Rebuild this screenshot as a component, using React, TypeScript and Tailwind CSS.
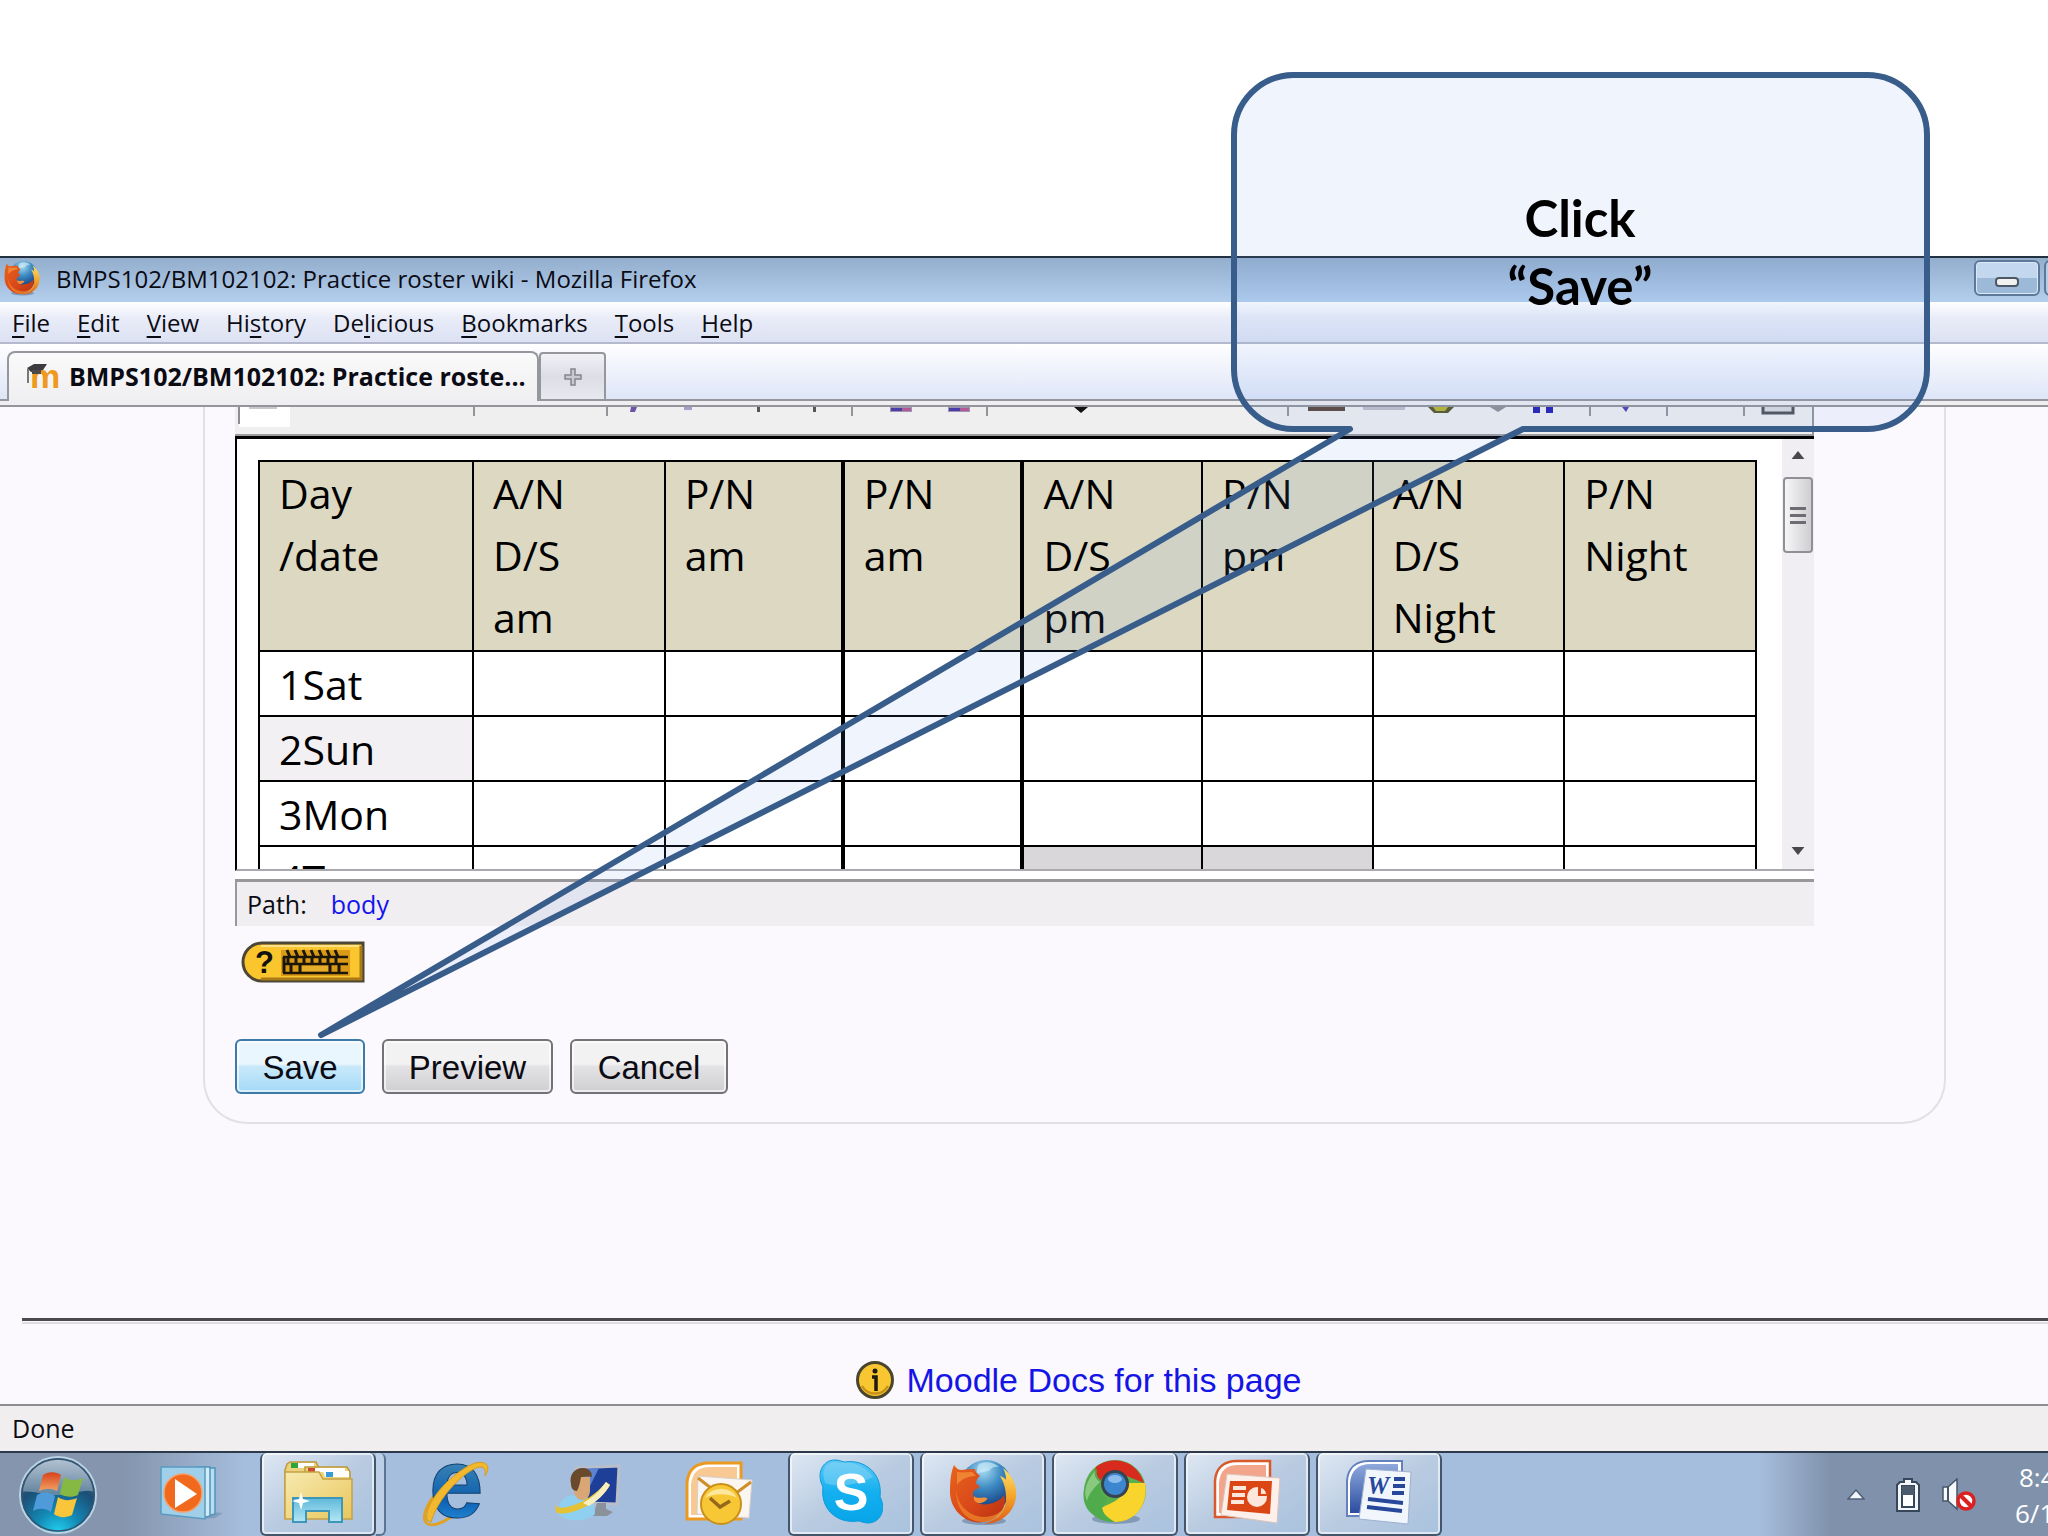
import React from "react";

type Column = { lines: string[]; width: string; thick?: boolean };

const columns: Column[] = [
  { lines: ["Day", "/date"], width: "w-[14.3%]" },
  { lines: ["A/N", "D/S", "am"], width: "w-[12.8%]" },
  { lines: ["P/N", "am"], width: "w-[11.9%]" },
  { lines: ["P/N", "am"], width: "w-[12%]", thick: true },
  { lines: ["A/N", "D/S", "pm"], width: "w-[12%]", thick: true },
  { lines: ["P/N", "pm"], width: "w-[11.4%]" },
  { lines: ["A/N", "D/S", "Night"], width: "w-[12.8%]" },
  { lines: ["P/N", "Night"], width: "w-[12.8%]" },
];

const rows = [
  { day: "1Sat", head: "bg-white", closed: [] as number[] },
  { day: "2Sun", head: "bg-[#f2f0f2]", closed: [] as number[] },
  { day: "3Mon", head: "bg-white", closed: [] as number[] },
  { day: "4Tue", head: "bg-white", closed: [4, 5] },
];

// label split around its access key
const menus = [
  ["", "F", "ile"],
  ["", "E", "dit"],
  ["", "V", "iew"],
  ["Hi", "s", "tory"],
  ["De", "l", "icious"],
  ["", "B", "ookmarks"],
  ["", "T", "ools"],
  ["", "H", "elp"],
];

const FirefoxIcon = ({ id, className }: { id: string; className: string }) => (
  <svg viewBox="0 0 68 68" className={className} aria-hidden="true">
    <defs>
      <radialGradient id={`${id}-globe`} cx="45%" cy="20%" r="75%">
        <stop offset="0" stopColor="#a9dcf2" />
        <stop offset="0.45" stopColor="#3f8cc4" />
        <stop offset="1" stopColor="#123a7c" />
      </radialGradient>
      <linearGradient id={`${id}-fox`} x1="0" y1="0" x2="1" y2="1">
        <stop offset="0" stopColor="#e8641c" />
        <stop offset="0.55" stopColor="#d9481a" />
        <stop offset="1" stopColor="#b5300f" />
      </linearGradient>
      <linearGradient id={`${id}-tail`} x1="0" y1="0" x2="0" y2="1">
        <stop offset="0" stopColor="#fbe06a" />
        <stop offset="0.5" stopColor="#f4a62a" />
        <stop offset="1" stopColor="#dd5a17" />
      </linearGradient>
    </defs>
    <ellipse cx="35" cy="63" rx="22" ry="4" fill="#27436b" opacity="0.35" />
    <circle cx="37" cy="28" r="26" fill={`url(#${id}-globe)`} />
    <path d="M30 6c6-3 15-2 20 3-5-1-8 1-10 4-5 0-8 3-12 2 0-4 0-6 2-9z" fill="#d6f0fa" opacity="0.6" />
    <path d="M54 10c9 7 14 17 13 28-1 16-15 28-32 28 16-5 22-14 22-26 0-11-3-17-6-22 3 1 5 2 6 4 0-5-1-8-3-12z" fill={`url(#${id}-tail)`} />
    <path d="M5 7c2 3 4 5 8 5 4-1 9-1 13-1 0 3 3 5 5 7-3 2-4 5-4 8 3 1 4 2 3 4-3 1-6 2-6 6 0 8 8 12 15 10 7-1 13-4 16-9 4 10-4 24-20 27C17 67 1 52 1 34 1 22 2 14 5 7z" fill={`url(#${id}-fox)`} />
    <path d="M25 38c4 4 9 0 13 2 1 2-5 6-9 5-3-1-5-4-4-7z" fill="#f4903a" />
    <path d="M7 30c0 14 10 28 28 29 10 0 18-5 22-12-1 9-10 17-23 17C17 64 6 50 7 30z" fill="#f08a2b" opacity="0.7" />
    <path d="M8 14c6 1 10 0 15 0l4 4c-7 0-14 2-19 9z" fill="#f08435" />
  </svg>
);

const MoodleIcon = () => (
  <svg viewBox="0 0 34 28" className="h-7 w-[34px] shrink-0 overflow-visible" aria-hidden="true">
    <text x="3" y="25" fontSize="34" fontWeight="bold" fontFamily="Liberation Sans, sans-serif" fill="#ef9a1c">
      m
    </text>
    <path d="M0 5l7-4h13l-4 6-12 2z" fill="#3c3c40" />
    <path d="M5 7h9v4H5z" fill="#4a4a4f" />
    <path d="M1 6v14" stroke="#77777c" strokeWidth="2" />
  </svg>
);

const KeyboardIcon = () => (
  <svg viewBox="0 0 124 42" className="h-[42px] w-[124px] overflow-visible" aria-hidden="true">
    <path d="M21 2h101v38H21C10 40 2 31 2 21S10 2 21 2z" fill="#fbc62d" stroke="#4c4636" strokeWidth="3" />
    <path d="M120 5v33H20" fill="none" stroke="#a97a16" strokeWidth="3" />
    <path d="M20 5h98" stroke="#fde08a" strokeWidth="2" />
    <text x="14" y="32" fontSize="31" fontWeight="bold" fontFamily="Liberation Sans, sans-serif" fill="#111">
      ?
    </text>
    <path d="M40 9h69v26H40z" fill="#d99a18" />
    <path d="M42 16h65M42 23h65M42 32h65" stroke="#1c1608" strokeWidth="2.5" />
    <path d="M46 9l3 7M54 9l3 7M62 9l3 7M70 9l3 7M78 9l3 7M86 9l3 7M94 9l3 7M47 16v7M55 16v7M63 16v7M71 16v7M79 16v7M87 16v7M95 16v7M50 24v8M59 24v8M89 24v8M98 24v8M43 16v16" stroke="#1c1608" strokeWidth="3" />
    <path d="M61 25h26v5H61z" fill="#e6ad2c" />
  </svg>
);

const StartIcon = () => (
  <svg viewBox="0 0 80 78" className="h-[78px] w-20" aria-hidden="true">
    <defs>
      <radialGradient id="orb" cx="50%" cy="100%" r="85%">
        <stop offset="0" stopColor="#22d3f2" />
        <stop offset="0.35" stopColor="#1389b5" />
        <stop offset="0.75" stopColor="#1b4f77" />
        <stop offset="1" stopColor="#3f5f7b" />
      </radialGradient>
      <linearGradient id="orb-gloss" x1="0" y1="0" x2="0" y2="1">
        <stop offset="0" stopColor="#d7e3ee" />
        <stop offset="1" stopColor="#7892aa" />
      </linearGradient>
      <linearGradient id="flag-red" x1="0" y1="0" x2="0" y2="1">
        <stop offset="0" stopColor="#d8431b" />
        <stop offset="1" stopColor="#f3a163" />
      </linearGradient>
    </defs>
    <circle cx="40" cy="39" r="38" fill="url(#orb)" stroke="#b9d3e5" strokeWidth="2" />
    <path d="M4 36C5 17 20 3 40 3s35 14 36 33c-10-4-22 4-36 3-14 1-26-5-36-3z" fill="url(#orb-gloss)" opacity="0.75" />
    <circle cx="40" cy="39" r="36" fill="none" stroke="#33536e" strokeWidth="1.5" />
    <path d="M25 19c7-4 13-3 18 0l-4 16c-6-3-11-3-18 0z" fill="url(#flag-red)" />
    <path d="M46 21c5 4 12 4 19 1l-5 17c-6 3-13 2-18-1z" fill="#86b944" />
    <path d="M19 39c7-4 13-3 18 1l-4 16c-6-4-12-4-18-1z" fill="#4f9ad9" />
    <path d="M40 41c5 4 12 4 19 1l-5 17c-6 3-13 3-18-1z" fill="#f9c53b" />
  </svg>
);

const MediaIcon = () => (
  <svg viewBox="0 0 64 56" className="h-14 w-16" aria-hidden="true">
    <path d="M46 46l18 2-8 5-14 1z" fill="#6c88a8" opacity="0.5" />
    <path d="M40 3h16v46l-12 3z" fill="#b9dcf0" stroke="#4f94bb" strokeWidth="1.5" />
    <path d="M38 2h13v49l-8 2z" fill="#d1ebf7" stroke="#4f94bb" strokeWidth="1.5" />
    <path d="M2 2h44v52L2 49z" fill="#9fcfe9" stroke="#5a9bc0" strokeWidth="1.5" />
    <circle cx="24" cy="28" r="19" fill="#f1691c" stroke="#f7a06a" strokeWidth="1.5" />
    <path d="M16 14v29l22-14z" fill="#fff" />
  </svg>
);

const FolderIcon = () => (
  <svg viewBox="0 0 70 64" className="h-16 w-[70px]" aria-hidden="true">
    <defs>
      <linearGradient id="folder" x1="0" y1="0" x2="1" y2="1">
        <stop offset="0" stopColor="#f7eab0" />
        <stop offset="1" stopColor="#e9c65c" />
      </linearGradient>
      <linearGradient id="rack" x1="0" y1="0" x2="0" y2="1">
        <stop offset="0" stopColor="#5fb9da" />
        <stop offset="1" stopColor="#b5e6f5" />
      </linearGradient>
    </defs>
    <path d="M4 4l3-2h26l3 6v50H2V10z" fill="#ecd27a" stroke="#bd993c" strokeWidth="1.5" />
    <path d="M14 3h17v5H14z" fill="#fff" />
    <path d="M8 3h7v5H8z" fill="#2aa63a" />
    <path d="M22 7h42l3 5v46H22z" fill="#efd57b" stroke="#bd993c" strokeWidth="1.5" />
    <path d="M30 8h32v4H30z" fill="#fff" />
    <path d="M25 8h7v5h-7z" fill="#cc4b2d" />
    <path d="M2 12h34l4 7h29v40H2z" fill="url(#folder)" stroke="#c5a146" strokeWidth="1.5" />
    <path d="M40 11h26v6H42z" fill="#fff" />
    <path d="M43 12h7v5h-7z" fill="#3a9bdc" />
    <path d="M10 38h49v24H46V51H23v11H10z" fill="url(#rack)" stroke="#3f97b8" strokeWidth="2" />
    <path d="M18 32l2 7 7 2-7 2-2 7-2-7-7-2 7-2z" fill="#fff" />
  </svg>
);

const ExplorerIcon = () => (
  <svg viewBox="0 0 70 66" className="h-[66px] w-[70px] overflow-visible" aria-hidden="true">
    <defs>
      <linearGradient id="ie" x1="0" y1="0" x2="0" y2="1">
        <stop offset="0.3" stopColor="#3c84b3" />
        <stop offset="0.65" stopColor="#0d5fb0" />
        <stop offset="1" stopColor="#30a5f0" />
      </linearGradient>
    </defs>
    <path d="M14 36c-9 12-13 24-6 28 6 3 16-2 26-9" fill="none" stroke="#e0a125" strokeWidth="3" />
    <text x="9" y="57" fontSize="98" fontWeight="bold" fontFamily="Liberation Sans, sans-serif" fill="url(#ie)" stroke="#13406f" strokeWidth="1">
      e
    </text>
    <path d="M7 60C4 47 22 22 45 8 54 2 62 1 66 4c3 3 2 7-1 12 1-5 0-8-3-9C52 5 20 32 11 62z" fill="#f3b92e" stroke="#d79a1e" strokeWidth="1" />
  </svg>
);

const MessengerIcon = () => (
  <svg viewBox="0 0 68 58" className="h-[58px] w-[68px]" aria-hidden="true">
    <path d="M23 4l43-2-2 38-32-1z" fill="#1e3f98" stroke="#b9bfca" strokeWidth="3" />
    <path d="M24 5l22-1-12 24-8 1z" fill="#5a83d2" />
    <path d="M44 39h9v6l7 3-6 4H40z" fill="#8b9199" />
    <path d="M5 50c0-14 8-19 19-19s18 6 18 19c-8 8-29 9-37 0z" fill="#8fd0f0" />
    <path d="M22 13h15v13c0 7-4 10-8 10s-8-4-8-10z" fill="#d8a775" />
    <path d="M18 20c-2-9 3-16 12-16 6 0 9 4 9 9-4-1-8 0-11 0-1 6-2 10-4 14-4 0-6-3-6-7z" fill="#6a4a2b" />
    <path d="M2 41c5 8 36-3 51-23l4 3C46 42 10 54 3 48z" fill="#e5c135" />
    <path d="M30 39c9-5 16-11 23-21l4 3c-6 10-13 16-21 21z" fill="#f8efc0" />
  </svg>
);

const OutlookIcon = () => (
  <svg viewBox="0 0 68 64" className="h-16 w-[68px]" aria-hidden="true">
    <path d="M2 58V22C3 8 12 2 24 2h32v56z" fill="#fff" stroke="#eb9a1f" strokeWidth="3" />
    <path d="M6 54V24C7 11 14 6 25 6h27v48z" fill="#f8c993" />
    <path d="M13 15l54 4-3 38-52-4z" fill="#fbf6f1" stroke="#d6cfc9" strokeWidth="1" />
    <path d="M13 17l22 17M66 21L43 38" stroke="#cf8e29" strokeWidth="3" />
    <circle cx="36" cy="43" r="20" fill="#f8c736" stroke="#c98f1b" strokeWidth="2" />
    <path d="M20 37a17 14 0 0 1 32 0c-8-5-24-5-32 0z" fill="#fde79c" />
    <path d="M25 37l10 9 10-6" fill="none" stroke="#95691a" strokeWidth="3.5" />
  </svg>
);

const SkypeIcon = () => (
  <svg viewBox="0 0 64 66" className="h-[66px] w-16" aria-hidden="true">
    <defs>
      <linearGradient id="skype" x1="0" y1="0" x2="0" y2="1">
        <stop offset="0" stopColor="#5fc8f5" />
        <stop offset="0.5" stopColor="#14b0f0" />
        <stop offset="1" stopColor="#07a4e8" />
      </linearGradient>
    </defs>
    <path d="M16 1c5 0 7 2 10 2C45 0 64 14 61 38c6 10 2 26-12 26-5 0-7-2-10-2C18 65 1 50 4 28-3 15 3 1 16 1z" fill="url(#skype)" stroke="#0b9bdb" strokeWidth="1" />
    <path d="M5 19C2 8 11 1 20 4c14-2 27 4 34 14-12 6-32 12-48 6z" fill="#9bdcf8" opacity="0.4" />
    <text x="32" y="51" textAnchor="middle" fontSize="52" fontWeight="bold" fontFamily="Liberation Sans, sans-serif" fill="#fff">
      S
    </text>
  </svg>
);

const ChromeIcon = () => (
  <svg viewBox="0 0 66 66" className="h-[66px] w-[66px]" aria-hidden="true">
    <ellipse cx="34" cy="60" rx="24" ry="5" fill="#3d5878" opacity="0.4" />
    <circle cx="33" cy="32" r="31" fill="#58b04c" />
    <path d="M14 8C26-2 53-3 62 24l-25-10c-10-2-17 4-19 8-4-4-6-8-4-14z" fill="#d92a1e" />
    <path d="M63 24C67 44 54 63 33 63c-6-1-10-4-13-14 4-4 22-6 25-25z" fill="#f8d42c" />
    <path d="M15 10C1 20-4 42 9 54c6 6 13 9 24 9-8-5-13-9-13-14 2-3 4-6 5-9-8-6-8-12-6-18-4-4-5-7-4-12z" fill="#4fab4c" />
    <path d="M13 12C4 22 1 33 5 42c2-8 8-14 13-19-4-3-6-6-5-11z" fill="#a2d597" opacity="0.7" />
    <circle cx="33" cy="25" r="14" fill="#37434f" />
    <circle cx="33" cy="25" r="11" fill="#3c86d0" />
    <ellipse cx="33" cy="20" rx="7" ry="4" fill="#8abcec" />
  </svg>
);

const PowerPointIcon = () => (
  <svg viewBox="0 0 68 66" className="h-[66px] w-[68px]" aria-hidden="true">
    <path d="M2 58V22C3 8 12 2 24 2h33v56z" fill="#fff" stroke="#d9592a" strokeWidth="2.5" />
    <path d="M6 54V24C7 11 14 6 25 6h28v48z" fill="#f2a58a" />
    <path d="M14 15l53 4-3 45-56-8z" fill="#fdf0ea" stroke="#dcc3ba" strokeWidth="1" />
    <path d="M17 22h42l-2 33-43-4z" fill="#dc4514" />
    <path d="M20 29h13M19 36h13M18 43h13" stroke="#fde7dd" strokeWidth="4" />
    <circle cx="44" cy="38" r="10" fill="#fde7dd" />
    <path d="M45 37V27a10 10 0 0 1 9 10z" fill="#dc4514" />
    <path d="M48 35v-6a7 7 0 0 1 5 6z" fill="#fde7dd" />
  </svg>
);

const WordIcon = () => (
  <svg viewBox="0 0 68 66" className="h-[66px] w-[68px]" aria-hidden="true">
    <defs>
      <linearGradient id="word" x1="0" y1="0" x2="0" y2="1">
        <stop offset="0" stopColor="#8fa9dc" />
        <stop offset="1" stopColor="#2c4da0" />
      </linearGradient>
    </defs>
    <path d="M2 57V22C3 8 12 2 24 2h33v55z" fill="#fff" stroke="#6480bd" strokeWidth="2" />
    <path d="M5 54V24C6 11 14 5 25 5h28v49z" fill="url(#word)" />
    <path d="M21 10l45 3-3 52-49-5z" fill="#f1f6fd" stroke="#9fb1cf" strokeWidth="1" />
    <text x="22" y="35" fontSize="25" fontWeight="bold" fontStyle="italic" fontFamily="Liberation Serif, serif" fill="#27479b">
      W
    </text>
    <path d="M49 20h11M48 27h12M47 34h12M23 40l35 4M22 48l35 4" stroke="#27479b" strokeWidth="4" />
  </svg>
);

const BatteryIcon = () => (
  <svg viewBox="0 0 26 36" className="h-9 w-[26px]" aria-hidden="true">
    <path d="M9 5V2h8v3h4l3 3v26H2V8l3-3z" fill="#f4f6f9" stroke="#36475b" strokeWidth="2" />
    <path d="M7 9h12v21H7z" fill="#fff" stroke="#36475b" strokeWidth="2" />
    <path d="M7 9h12v9H7z" fill="#4b5a6c" />
  </svg>
);

const SpeakerIcon = () => (
  <svg viewBox="0 0 36 34" className="h-[34px] w-9" aria-hidden="true">
    <path d="M2 9h5l9-8v30l-9-8H2z" fill="#f7f9fb" stroke="#46566a" strokeWidth="1.5" />
    <path d="M7 9v14" stroke="#46566a" strokeWidth="2" />
    <circle cx="25" cy="23" r="8" fill="#fff" stroke="#dc1f1f" strokeWidth="3.5" />
    <path d="M19 17l12 12" stroke="#dc1f1f" strokeWidth="4" />
  </svg>
);

const InfoIcon = () => (
  <svg viewBox="0 0 40 40" className="h-10 w-10" aria-hidden="true">
    <circle cx="20" cy="20" r="17.5" fill="#f8c630" stroke="#4a452f" strokeWidth="3" />
    <path d="M7 26a15 15 0 0 0 26 0" fill="none" stroke="#c79118" strokeWidth="2.5" />
    <circle cx="20" cy="11" r="2.5" fill="#1d1a10" />
    <path d="M17 17h4v14" fill="none" stroke="#1d1a10" strokeWidth="3.5" />
  </svg>
);

// only the lower edge of the editor's button row shows under the tab bar
const ToolbarEdge = () => (
  <svg viewBox="0 0 1576 27" className="block h-[27px] w-[1576px] shrink-0" aria-hidden="true">
    <path d="M4 0h51v20H4z" fill="#fff" />
    <path d="M4 0v17" stroke="#8d8d92" strokeWidth="2" />
    <path d="M14 0h28v2H14z" fill="#c9c8cd" />
    <path d="M239 0v9M372 0v9M617 0v9M752 0v9M1053 0v9M1355 0v9M1432 0v9M1509 0v9" stroke="#94949a" strokeWidth="2" />
    <path d="M396 0h6l-2 5h-5z" fill="#6a55a8" />
    <path d="M449 0h8v3h-8z" fill="#a89cd0" />
    <path d="M522 0h3v5h-3zM578 0h3v5h-3z" fill="#55555a" />
    <path d="M655 0h22v5h-22zM713 0h22v5h-22z" fill="#9f93b4" />
    <path d="M656 1h11v3h-11zM714 1h11v3h-11z" fill="#4a3fa8" />
    <path d="M667 1h9v3h-9zM725 1h9v3h-9z" fill="#b25a98" />
    <path d="M839 0h14l-7 6z" fill="#111" />
    <path d="M1073 0h37v4h-37z" fill="#5b4638" />
    <path d="M1128 0h42v3h-42z" fill="#bfc0c8" />
    <path d="M1193 0h26l-6 6h-14z" fill="#55552a" />
    <path d="M1198 0h15l-3 4h-9z" fill="#b9b52c" />
    <path d="M1255 0h16l-8 5z" fill="#8e9096" />
    <path d="M1298 0h7v6h-7zM1311 0h7v6h-7z" fill="#2320b4" />
    <path d="M1387 0h7l-3 5z" fill="#4b3fb2" />
    <path d="M1528 0v6h30V0" fill="#d9dade" stroke="#4f5256" strokeWidth="3" />
  </svg>
);

const TitleBar = () => (
  <div className="flex h-[46px] items-center overflow-hidden border-t-2 border-[#23303f] bg-linear-to-b from-[#94aecd] to-[#b3cfed]">
    <FirefoxIcon id="title-fx" className="mb-1 ml-1 h-9 w-9 shrink-0" />
    <h1 className="ml-4 flex-1 pb-[2px] text-[24px] whitespace-nowrap">BMPS102/BM102102: Practice roster wiki - Mozilla Firefox</h1>
    <button
      type="button"
      aria-label="Minimize"
      className="mb-1 flex h-9 w-[66px] shrink-0 items-center justify-center rounded-md border-2 border-[#5d7898] bg-linear-to-b from-[#c3d8ee] from-50% to-[#9db9d8] to-50% pt-2 inset-ring inset-ring-[#dbe9f6]"
    >
      <span className="h-[10px] w-6 rounded-sm border-2 border-[#4d5866] bg-[#f1f1f1]" />
    </button>
    <button
      type="button"
      aria-label="Maximize"
      className="-mr-15 mb-1 ml-1 h-9 w-16 shrink-0 rounded-md border-2 border-[#5d7898] bg-[#b4cde8]"
    />
  </div>
);

const MenuBar = () => (
  <nav className="flex h-[42px] items-center gap-[27px] border-b-2 border-[#b4b9cb] bg-linear-to-b from-white via-[#e9ecf8] via-40% to-[#dce2f3] pt-[2px] pl-3">
    {menus.map(([before, key, after]) => (
      <button type="button" key={before + key + after} className="text-[24px] leading-8">
        {before}
        <span className="underline decoration-2 underline-offset-4">{key}</span>
        {after}
      </button>
    ))}
  </nav>
);

const TabBar = () => (
  <div>
    <div className="flex h-[57px] items-end bg-linear-to-b from-white via-[#eef1fb] via-50% to-[#dce5f7]">
      <div className="h-full w-[7px] border-b-2 border-[#96969e]" />
      <div className="flex h-[50px] w-[532px] items-center rounded-t-lg border-2 border-b-0 border-[#96969e] bg-linear-to-b from-[#fbfafb] to-[#efeef0] pl-[18px]">
        <MoodleIcon />
        <span className="ml-2 text-[25px] font-bold whitespace-nowrap">BMPS102/BM102102: Practice roste...</span>
      </div>
      <button
        type="button"
        aria-label="Open a new tab"
        className="flex h-[49px] w-[67px] items-center justify-center rounded-t-sm border-2 border-[#96969e] bg-linear-to-b from-[#f1f1f6] via-[#dcdde6] to-[#e8e8ef]"
      >
        <svg viewBox="0 0 18 18" className="h-[18px] w-[18px]" aria-hidden="true">
          <path d="M7 1h4v6h6v4h-6v6H7v-6H1V7h6z" fill="#c9c9d0" stroke="#85858d" strokeWidth="1.5" />
        </svg>
      </button>
      <div className="h-full flex-1 border-b-2 border-[#96969e]" />
    </div>
    <div className="h-[6px] border-b-2 border-[#94949b] bg-[#efeef0]" />
  </div>
);

const RosterTable = () => (
  <table className="w-full table-fixed border-collapse border-2 border-black bg-white font-['Open_Sans','Noto_Sans',sans-serif] text-[41px] text-black">
    <thead>
      <tr className="h-[190px] bg-[#dcd8c2]">
        {columns.map((col, i) => (
          <th
            key={i}
            scope="col"
            className={`${col.width} border-2 border-black ${col.thick ? "border-l-4" : ""} pl-[19px] text-left align-top leading-[62px] font-normal`}
          >
            {col.lines.map((line) => (
              <div key={line}>{line}</div>
            ))}
          </th>
        ))}
      </tr>
    </thead>
    <tbody>
      {rows.map((row) => (
        <tr key={row.day} className="h-[65px]">
          <th scope="row" className={`border-2 border-black pl-[19px] text-left leading-[62px] font-normal ${row.head}`}>
            {row.day}
          </th>
          {columns.slice(1).map((col, i) => (
            <td
              key={i}
              className={`border-2 border-black ${col.thick ? "border-l-4" : ""} ${row.closed.includes(i + 1) ? "bg-[#d9d7da]" : ""}`}
            />
          ))}
        </tr>
      ))}
    </tbody>
  </table>
);

const ScrollBar = () => (
  <div className="flex w-8 shrink-0 flex-col items-center bg-[#f0eef2]">
    <button type="button" aria-label="Scroll up" className="flex h-[38px] w-full items-start justify-center pt-3">
      <svg viewBox="0 0 16 10" className="h-2 w-4" aria-hidden="true">
        <path d="M8 0l8 10H0z" fill="#48484c" />
      </svg>
    </button>
    <div className="flex h-19 w-[30px] flex-col items-center justify-center gap-1 rounded-sm border-2 border-[#8f8f95] bg-linear-to-r from-[#f6f6f7] to-[#cfcfd3]">
      <span className="h-[3px] w-4 bg-[#6d6d73]" />
      <span className="h-[3px] w-4 bg-[#6d6d73]" />
      <span className="h-[3px] w-4 bg-[#6d6d73]" />
    </div>
    <button type="button" aria-label="Scroll down" className="mt-auto flex h-9 w-full items-center justify-center">
      <svg viewBox="0 0 16 10" className="h-2 w-4" aria-hidden="true">
        <path d="M8 10L0 0h16z" fill="#48484c" />
      </svg>
    </button>
  </div>
);

const Editor = () => (
  <div>
    <div className="overflow-hidden border-r-2 border-b-2 border-r-[#94949a] border-b-[#9d9c9f] bg-[#f0eff0]">
      <ToolbarEdge />
    </div>
    <div className="flex h-[435px] overflow-hidden border-t-3 border-b-2 border-l-2 border-t-black border-b-[#aaa9ae] border-l-black bg-white">
      <div className="h-full min-w-0 flex-1 overflow-hidden pt-[21px] pr-[25px] pl-[21px]">
        <RosterTable />
      </div>
      <ScrollBar />
    </div>
    <div className="h-2 bg-white" />
    <div className="flex h-[47px] items-center gap-6 border-t-3 border-l-2 border-[#98979c] bg-[#f0eef0] pt-[2px] pl-[10px] text-[25px]">
      <span>Path:</span>
      <a href="#body" className="text-[#1414ee]">
        body
      </a>
    </div>
  </div>
);

const formButton =
  "h-[55px] rounded-md border-2 pt-[2px] font-['Liberation_Sans',Arial,sans-serif] text-[33px] inset-ring-2 inset-ring-white/60";
const greyButton = "border-[#727277] bg-linear-to-b from-[#f3f2f3] from-45% via-[#e3e2e4] via-50% to-[#cfced1]";

const WikiPage = () => (
  <main className="flex-1 bg-[#fbf9fd]">
    <section className="mr-[102px] ml-[203px] rounded-b-[44px] border-2 border-t-0 border-[#e2e0e4] pr-[130px] pb-7 pl-[30px]">
      <Editor />
      <a href="#shortcuts" aria-label="Keyboard shortcuts" className="mt-[15px] ml-[6px] block w-[124px]">
        <KeyboardIcon />
      </a>
      <div className="mt-14 flex gap-[17px]">
        <button
          type="submit"
          className={`${formButton} w-[130px] border-[#3d7aa8] bg-linear-to-b from-[#eaf6fd] from-45% via-[#c9e9fb] via-50% to-[#a3d9f6]`}
        >
          Save
        </button>
        <button type="button" className={`${formButton} ${greyButton} w-[171px]`}>
          Preview
        </button>
        <button type="button" className={`${formButton} ${greyButton} w-[158px]`}>
          Cancel
        </button>
      </div>
    </section>
    <hr className="mt-[194px] ml-[22px] h-[6px] border-t-3 border-b-2 border-t-[#4b4a4f] border-b-[#dedce0]" />
    <footer className="flex justify-center pt-9 pl-27">
      <a href="#docs" className="flex items-center gap-3 font-['Liberation_Sans',Arial,sans-serif] text-[34px] leading-10 text-[#1414e6]">
        <InfoIcon />
        Moodle Docs for this page
      </a>
    </footer>
  </main>
);

const running =
  "border-2 border-t-0 border-[#44566c] bg-linear-to-br from-[#dfe8f3] via-[#b9cbe1] to-[#a9c2de] inset-ring-2 inset-ring-white/60";

const apps = [
  { name: "Media Player", icon: <MediaIcon />, open: false },
  { name: "File Explorer", icon: <FolderIcon />, open: true, stacked: true },
  { name: "Internet Explorer", icon: <ExplorerIcon />, open: false },
  { name: "Messenger", icon: <MessengerIcon />, open: false },
  { name: "Outlook", icon: <OutlookIcon />, open: false },
  { name: "Skype", icon: <SkypeIcon />, open: true },
  { name: "Firefox", icon: <FirefoxIcon id="task-fx" className="h-[68px] w-[68px]" />, open: true },
  { name: "Chrome", icon: <ChromeIcon />, open: true },
  { name: "PowerPoint", icon: <PowerPointIcon />, open: true },
  { name: "Word", icon: <WordIcon />, open: true },
];

const TaskBar = () => (
  <div className="flex h-[85px] overflow-hidden border-t-2 border-[#2c3a4b] bg-[#a6bedd] bg-linear-to-r from-[#8495ad] from-6% via-[#a6bedd] via-12% to-[#a6bedd]">
    <button type="button" aria-label="Start" className="ml-[18px] flex w-20 shrink-0 items-center">
      <StartIcon />
    </button>
    <div className="ml-[30px] flex shrink-0 gap-[6px]">
      {apps.map((app) => (
        <div key={app.name} className="flex w-[126px]">
          <button
            type="button"
            aria-label={app.name}
            className={`flex min-w-0 flex-1 items-center justify-center rounded-md pb-1 ${app.open ? running : ""}`}
          >
            {app.icon}
          </button>
          {app.stacked && <span className="w-[10px] rounded-r-md border-2 border-t-0 border-l-0 border-[#5d7390] bg-[#bccfe6]" />}
        </div>
      ))}
    </div>
    <div className="ml-auto flex shrink-0 items-center bg-linear-to-r from-[#a6bedd] to-[#8092ab] to-25% pl-[88px]">
      <button type="button" aria-label="Show hidden icons">
        <svg viewBox="0 0 18 12" className="h-3 w-[18px]" aria-hidden="true">
          <path d="M9 1l8 9H1z" fill="#f1f4f8" stroke="#4e5f76" strokeWidth="1.5" />
        </svg>
      </button>
      <div className="ml-[30px]">
        <BatteryIcon />
      </div>
      <div className="ml-[20px]">
        <SpeakerIcon />
      </div>
      <div className="ml-[38px] w-[33px] overflow-hidden text-[26px] leading-9 whitespace-nowrap text-white">
        <div className="pl-1">8:4</div>
        <div>6/1</div>
      </div>
    </div>
  </div>
);

// speech bubble pinned over the window, its tail ends at the Save button
const Callout = () => (
  <div className="absolute top-[72px] left-[1231px] flex h-[360px] w-[698px] items-center justify-center">
    <svg viewBox="0 0 698 360" className="absolute inset-0 h-full w-full overflow-visible" aria-hidden="true">
      <path
        d="M62 3H636A60 60 0 0 1 696 63V297A60 60 0 0 1 636 357H292L-910 963L119 357H62A60 60 0 0 1 3 297V63A60 60 0 0 1 62 3Z"
        fill="#6f9bea"
        fillOpacity="0.1"
        stroke="#385d8a"
        strokeWidth="6"
        strokeLinejoin="round"
      />
    </svg>
    <p className="relative text-center font-['Lato',sans-serif] text-[51px] leading-[68px] font-bold text-black">
      Click
      <br />
      “Save”
    </p>
  </div>
);

const App = () => {
  return (
    <div className="relative flex min-h-screen flex-col overflow-hidden bg-white pt-64 font-['Open_Sans','Noto_Sans',sans-serif] text-[#0b0b14]">
      <TitleBar />
      <MenuBar />
      <TabBar />
      <WikiPage />
      <div className="flex h-[47px] items-center border-t-2 border-[#8e8d92] bg-[#f1eeef] pl-3 text-[25px]" role="status">
        Done
      </div>
      <TaskBar />
      <Callout />
    </div>
  );
};

export default App;
